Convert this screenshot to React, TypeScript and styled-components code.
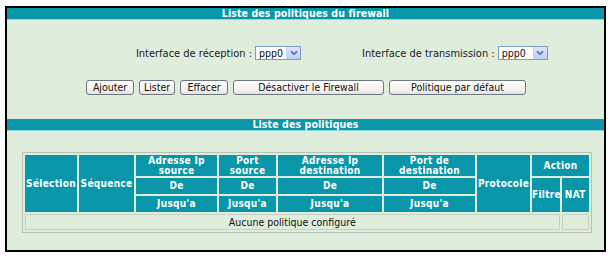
import styled, { createGlobalStyle } from "styled-components";

const GlobalStyle = createGlobalStyle`
  html, body {
    margin: 0;
    padding: 0;
    background: #ffffff;
  }
  body {
    font-family: "DejaVu Sans Condensed", "DejaVu Sans", sans-serif;
  }
`;

const Page = styled.div`
  padding: 6px 4px 4px 5px;
  width: 610px;
  box-sizing: border-box;
`;

const Frame = styled.div`
  border: 2px solid #000;
  background: #dfeddd;
  height: 246px;
  box-sizing: border-box;
  display: flex;
  flex-direction: column;
`;

const Bar = styled.div<{ top?: number }>`
  margin-top: ${(p) => p.top || 0}px;
  height: 11px;
  border-bottom: 1px solid #8fd6dc;
  background: #0896a8;
  color: #fff;
  font-size: 10.5px;
  font-weight: bold;
  line-height: 11px;
  text-align: center;
  letter-spacing: 0.1px;
`;

const IfaceRow = styled.div`
  margin-top: 26px;
  display: grid;
  grid-template-columns: 294px 1fr;
  align-items: center;
  font-size: 11px;
  color: #1a1a1a;
`;

const IfaceCell = styled.div<{ right?: boolean }>`
  display: flex;
  align-items: center;
  justify-content: ${(p) => (p.right ? "flex-end" : "flex-start")};
  padding-left: ${(p) => (p.right ? 0 : 61)}px;
  gap: 3px;
`;

const Select = styled.div<{ w: number }>`
  width: ${(p) => p.w}px;
  height: 14px;
  border: 1px solid #7f9db9;
  background: #fff;
  display: flex;
  align-items: center;
  box-sizing: border-box;
  font-size: 10.5px;
  color: #111;
`;

const SelectText = styled.span`
  flex: 1;
  padding-left: 3px;
  line-height: 12px;
`;

const Arrow = styled.span`
  width: 13px;
  height: 12px;
  background: linear-gradient(#dbe6fc, #b9cdf5);
  border-left: 1px solid #c3d3f3;
  display: flex;
  align-items: center;
  justify-content: center;
`;

const ButtonRow = styled.div`
  margin-top: 20px;
  display: flex;
  justify-content: center;
  gap: 5px;
  padding-left: 1px;
`;

const Button = styled.div<{ w: number }>`
  width: ${(p) => p.w}px;
  height: 15px;
  box-sizing: border-box;
  border: 1px solid #6d7781;
  border-radius: 3px;
  background: linear-gradient(#ffffff, #f2f1ea 70%, #e3e2da);
  font-size: 10.5px;
  line-height: 13px;
  text-align: center;
  color: #111;
`;

const TableWrap = styled.div`
  margin-top: 21px;
  padding-left: 15px;
`;

const Table = styled.table`
  width: 570px;
  border: 1px solid #b9c2b6;
  border-spacing: 2px;
  table-layout: fixed;
`;

const Th = styled.th<{ w?: number }>`
  ${(p) => (p.w ? `width: ${p.w}px;` : "")}
  background: #0896a8;
  color: #fff;
  font-size: 10px;
  font-weight: bold;
  line-height: 10px;
  padding: 0;
  text-align: center;
  letter-spacing: 0.3px;
`;

const Sub = styled(Th)`
  height: 16px;
`;

const Top = styled(Th)`
  height: 21px;
`;

const Empty = styled.td`
  border: 1px solid #c7cfc4;
  height: 14px;
  padding: 0;
  font-size: 10.5px;
  text-align: center;
  color: #111;
`;

function Chevron() {
  return (
    <svg width="8" height="6" viewBox="0 0 8 6">
      <path d="M1 1.2 L4 4.2 L7 1.2" fill="none" stroke="#4d6aa0" strokeWidth="1.6" />
    </svg>
  );
}

function Dropdown({ w }: { w: number }) {
  return (
    <Select w={w}>
      <SelectText>ppp0</SelectText>
      <Arrow>
        <Chevron />
      </Arrow>
    </Select>
  );
}

function App() {
  return (
    <Page>
      <GlobalStyle />
      <Frame>
        <Bar>Liste des politiques du firewall</Bar>
        <IfaceRow>
          <IfaceCell right>
            <span>Interface de réception :</span>
            <Dropdown w={46} />
          </IfaceCell>
          <IfaceCell>
            <span>Interface de transmission :</span>
            <Dropdown w={50} />
          </IfaceCell>
        </IfaceRow>
        <ButtonRow>
          <Button w={48}>Ajouter</Button>
          <Button w={36}>Lister</Button>
          <Button w={48}>Effacer</Button>
          <Button w={151}>Désactiver le Firewall</Button>
          <Button w={137}>Politique par défaut</Button>
        </ButtonRow>
        <Bar top={24}>Liste des politiques</Bar>
        <TableWrap>
          <Table>
            <tbody>
              <tr>
                <Th w={52} rowSpan={3}>Sélection</Th>
                <Th w={55} rowSpan={3}>Séquence</Th>
                <Top w={81}>Adresse Ip<br />source</Top>
                <Top w={57}>Port<br />source</Top>
                <Top w={104}>Adresse Ip<br />destination</Top>
                <Top w={91}>Port de<br />destination</Top>
                <Th w={53} rowSpan={3}>Protocole</Th>
                <Top colSpan={2}>Action</Top>
              </tr>
              <tr>
                <Sub>De</Sub>
                <Sub>De</Sub>
                <Sub>De</Sub>
                <Sub>De</Sub>
                <Th w={31} rowSpan={2}>Filtre</Th>
                <Th w={25} rowSpan={2}>NAT</Th>
              </tr>
              <tr>
                <Sub>Jusqu'a</Sub>
                <Sub>Jusqu'a</Sub>
                <Sub>Jusqu'a</Sub>
                <Sub>Jusqu'a</Sub>
              </tr>
              <tr>
                <Empty colSpan={8}>Aucune politique configuré</Empty>
                <Empty />
              </tr>
            </tbody>
          </Table>
        </TableWrap>
      </Frame>
    </Page>
  );
}

export default App;
